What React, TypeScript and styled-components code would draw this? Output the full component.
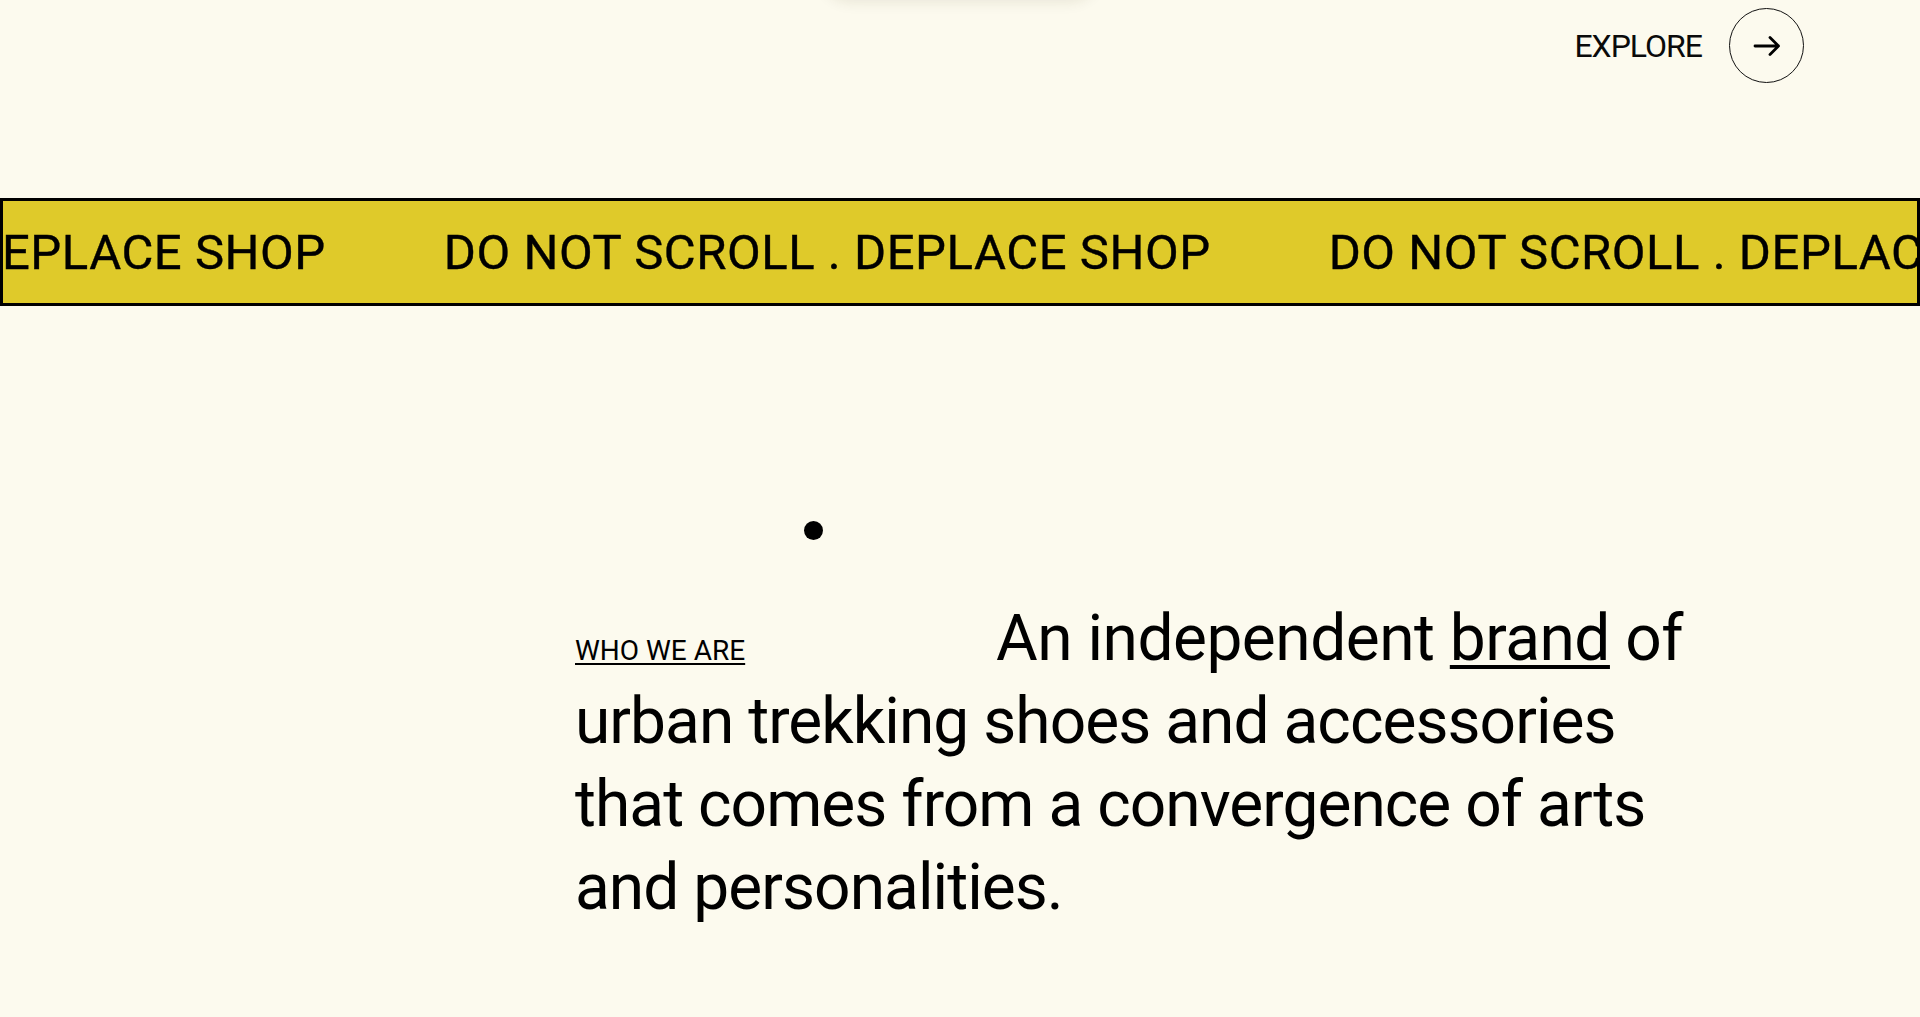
import React from "react";
import styled, { createGlobalStyle } from "styled-components";

const GlobalStyle = createGlobalStyle`
  html, body {
    margin: 0;
    padding: 0;
    background: #fcfaee;
    overflow: hidden;
  }
  body {
    font-family: Roboto, "Liberation Sans", Arial, sans-serif;
    color: #0a0a0a;
  }
  * { box-sizing: border-box; }
`;

const Page = styled.div`
  position: relative;
  width: 1920px;
  height: 1017px;
  overflow: hidden;
  background: #fcfaee;
`;

const TopPill = styled.div`
  position: absolute;
  top: -64px;
  left: 822px;
  width: 276px;
  height: 64px;
  border-radius: 0 0 28px 28px;
  background: #fcfaee;
  box-shadow: 0 2px 14px rgba(60, 50, 20, 0.1);
`;

const Header = styled.header`
  display: flex;
  justify-content: flex-end;
  align-items: center;
  gap: 27px;
  padding: 8px 116px 0 0;
`;

const ExploreLabel = styled.span`
  font-size: 32px;
  letter-spacing: -1px;
  font-weight: 400;
  text-transform: uppercase;
  color: #0a0a0a;
`;

const CircleButton = styled.button`
  width: 75px;
  height: 75px;
  border-radius: 50%;
  border: 1.5px solid #111;
  background: transparent;
  display: flex;
  align-items: center;
  justify-content: center;
  padding: 0;
  cursor: pointer;
`;

const Band = styled.div`
  margin-top: 115px;
  width: 100%;
  height: 108px;
  border: 3px solid #000;
  background: #dfca2a;
  overflow: hidden;
  display: flex;
  align-items: center;
`;

const Track = styled.div`
  display: flex;
  gap: 118px;
  white-space: nowrap;
  transform: translateX(-444px);
`;

const MarqueeItem = styled.span`
  font-size: 49px;
  letter-spacing: 0.55px;
  font-weight: 400;
  color: #000;
  line-height: 1;
  -webkit-text-stroke: 0.4px #000;
`;

const About = styled.section`
  margin-top: 291px;
  padding: 0 195px 0 575px;
`;

const Statement = styled.p`
  margin: 0;
  font-size: 64px;
  line-height: 83px;
  letter-spacing: -0.95px;
  font-weight: 400;
  color: #000;
`;

const Eyebrow = styled.span`
  display: inline-block;
  width: 421px;
  font-size: 28px;
  letter-spacing: 0;
  line-height: 1;
  text-transform: uppercase;
  text-decoration: underline;
  text-decoration-thickness: 1.5px;
  text-underline-offset: 3px;
`;

const FirstLine = styled.span`
  letter-spacing: -0.5px;
`;

const Underlined = styled.span`
  text-decoration: underline;
  text-decoration-thickness: 4px;
  text-underline-offset: 5px;
`;

const CursorDot = styled.div`
  position: absolute;
  left: 804px;
  top: 521px;
  width: 19px;
  height: 19px;
  border-radius: 50%;
  background: #000;
`;

const ArrowIcon = () => (
  <svg width="28" height="22" viewBox="0 0 28 22" fill="none">
    <path
      d="M2 11 H25.5 M17 2.5 L25.5 11 L17 19.5"
      stroke="#000"
      strokeWidth="2.8"
      strokeLinecap="round"
      strokeLinejoin="round"
    />
  </svg>
);

const items = Array.from({ length: 4 }, () => "DO NOT SCROLL . DEPLACE SHOP");

export default function App() {
  return (
    <Page>
      <GlobalStyle />
      <TopPill />
      <Header>
        <ExploreLabel>Explore</ExploreLabel>
        <CircleButton aria-label="Explore">
          <ArrowIcon />
        </CircleButton>
      </Header>
      <Band>
        <Track>
          {items.map((t, i) => (
            <MarqueeItem key={i}>{t}</MarqueeItem>
          ))}
        </Track>
      </Band>
      <About>
        <Statement>
          <Eyebrow>Who we are</Eyebrow>
          <FirstLine>
            An independent <Underlined>brand</Underlined> of
          </FirstLine>{" "}
          urban trekking shoes and accessories that comes from a convergence of arts and
          personalities.
        </Statement>
      </About>
      <CursorDot />
    </Page>
  );
}
